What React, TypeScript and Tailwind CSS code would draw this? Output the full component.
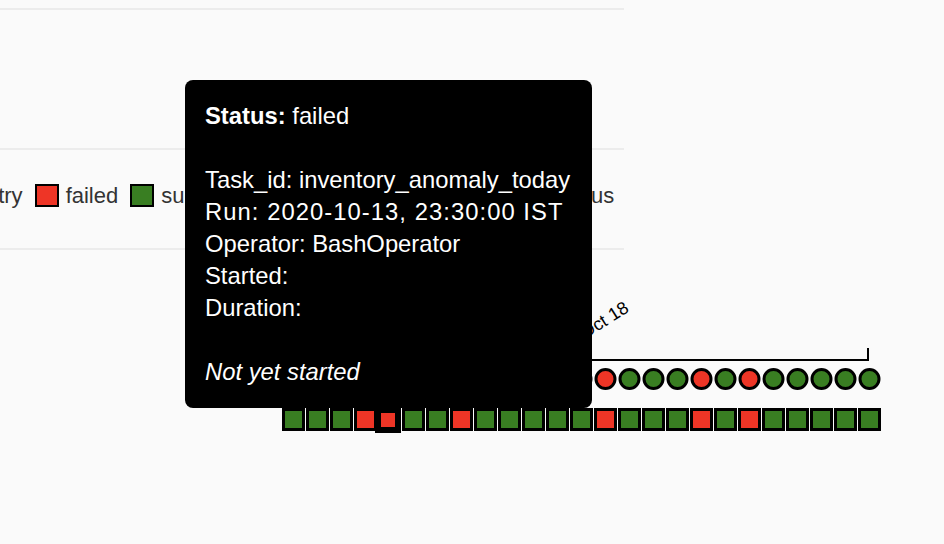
import React from 'react';

const RED = '#ee3526';
const GREEN = '#397e22';

// task instance states per run column, left to right
const states = 'GGGRRGGRGGGGGRGGGRGRGGGGG'.split('');
const hovered = 4;

const legend = [
    { label: 'up_for_retry', color: '#f0c000' },
    { label: 'failed', color: RED },
    { label: 'success', color: GREEN },
    { label: 'running', color: '#7cfc00' },
    { label: 'skipped', color: '#ff69b4' },
    { label: 'no_status', color: '#ffffff' },
];

const Divider = () => <div className="h-[2px] bg-[#ececec]" />;

const TreeChart = () => {
    const colX = (i: number) => 282 + i * 24;
    return (
        <svg width={944} height={294} className="block">
            <text
                x={630}
                y={61}
                textAnchor="end"
                transform="rotate(-32 630 61)"
                fontSize={18}
                fill="#000"
                style={{ fontFamily: '"Liberation Sans", Arial, sans-serif' }}
            >
                Oct 18
            </text>
            <path d="M 300 110 H 868 V 98" fill="none" stroke="#000" strokeWidth={2} />
            {states.map((s, i) => (
                <circle
                    key={`c${i}`}
                    cx={colX(i) + 11.5}
                    cy={129}
                    r={9.5}
                    fill={s === 'R' ? RED : GREEN}
                    stroke="#000"
                    strokeWidth={3}
                />
            ))}
            {states.map((s, i) =>
                i === hovered ? null : (
                    <rect
                        key={`r${i}`}
                        x={colX(i) + 1.5}
                        y={159.5}
                        width={20}
                        height={20}
                        fill={s === 'R' ? RED : GREEN}
                        stroke="#000"
                        strokeWidth={3}
                    />
                )
            )}
            <rect x={colX(hovered)} y={160} width={20} height={20} fill={RED} stroke="#000" strokeWidth={6} />
        </svg>
    );
};

export default function App() {
    return (
        <div
            className="relative w-[944px] h-[544px] overflow-hidden bg-[#fafafa]"
            style={{ fontFamily: '"Liberation Sans", Arial, Helvetica, sans-serif' }}
        >
            <div className="w-[624px] pt-[8px]">
                <Divider />
                <div className="h-[138px]" />
                <Divider />
                <div className="h-[98px] flex items-center pb-[7px] whitespace-nowrap">
                    <div className="flex items-center -ml-[127px] text-[22px] text-[#333]">
                        {legend.map((item) => (
                            <div key={item.label} className="flex items-center mr-[12px]">
                                <span
                                    className="w-[24px] h-[23px] border-2 border-black mr-[7px]"
                                    style={{ background: item.color }}
                                />
                                <span>{item.label}</span>
                            </div>
                        ))}
                    </div>
                </div>
                <Divider />
            </div>
            <TreeChart />

            {/* Tooltip */}
            <div className="absolute left-[185px] top-[80px] w-[407px] rounded-lg bg-black p-[20px] text-white text-[23.8px] leading-[32px] whitespace-nowrap">
                <div>
                    <span className="font-bold">Status:</span> failed
                </div>
                <div className="h-[32px]" />
                <div>Task_id: inventory_anomaly_today</div>
                <div className="tracking-[1.05px]">Run: 2020-10-13, 23:30:00 IST</div>
                <div>Operator: BashOperator</div>
                <div>Started:</div>
                <div>Duration:</div>
                <div className="h-[32px]" />
                <div className="italic">Not yet started</div>
            </div>
        </div>
    );
}
